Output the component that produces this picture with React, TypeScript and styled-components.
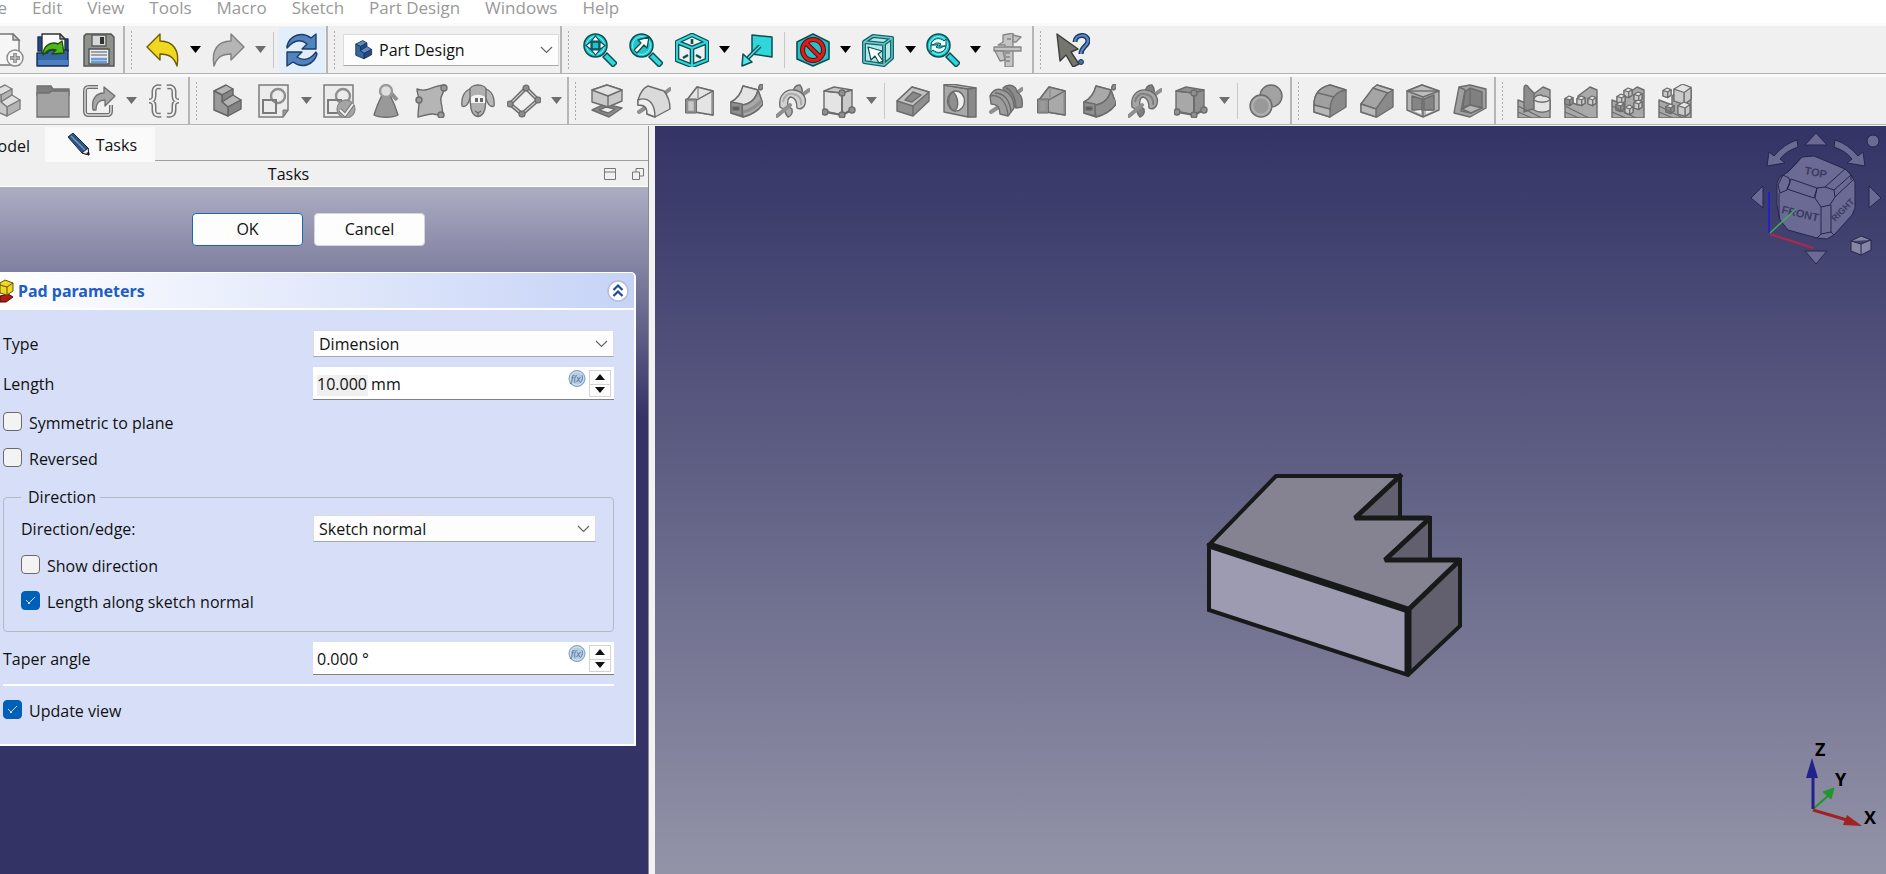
import React, { useId, useState } from 'react';
import styled, { createGlobalStyle, css } from 'styled-components';

const GlobalStyle = createGlobalStyle`
  *, *::before, *::after { box-sizing: border-box; }
  html, body { margin: 0; padding: 0; }
  body { font-family: "Open Sans", "Noto Sans", sans-serif; font-size: 16px; color: #111; background: #f0f0f0; }
  button, input, select { font: inherit; color: inherit; margin: 0; }
  svg { display: block; flex: none; }
`;

/* ---------- layout ---------- */

const Window = styled.div`
  display: flex;
  flex-direction: column;
  min-height: 100vh;
  overflow: hidden;
`;

const MenuBar = styled.nav`
  display: flex;
  gap: 25px;
  height: 23px;
  background: #fff;
  font-size: 17px;
  line-height: 16px;
`;

const MenuItem = styled.button<{ $clipped?: boolean }>`
  display: flex;
  justify-content: flex-end;
  align-items: flex-start;
  border: 0;
  padding: 0;
  background: none;
  color: #999;
  white-space: nowrap;
  ${(p) => p.$clipped && css`width: 7px; overflow: hidden;`}
`;

const ToolRow = styled.div`
  display: flex;
  height: 51px;
  background: #f0f0f0;
  border-top: 3px solid #fafafa;
  border-bottom: 1px solid #b2b2b2;
`;

const ToolGroup = styled.div<{ $width: number; $open?: boolean }>`
  display: flex;
  flex: none;
  justify-content: flex-end;
  align-items: center;
  width: ${(p) => p.$width}px;
  overflow: hidden;
  padding-right: 1px;
  border-right: ${(p) => (p.$open ? '0' : '2px solid #b6b6b6')};
`;

const Grip = styled.span`
  flex: none;
  width: 15px;
  height: 40px;
  background: radial-gradient(circle, #aaa 1px, transparent 1px) 4px 0 / 5px 4px repeat-y;
`;

const ToolButton = styled.button<{ $active?: boolean; $fixed?: boolean }>`
  display: flex;
  flex: ${(p) => (p.$fixed ? '0 0 46px' : '1 0 46px')};
  justify-content: center;
  align-items: center;
  height: 46px;
  padding: 0;
  border: 0;
  background: ${(p) => (p.$active ? '#e2effa' : 'none')};
`;

const DropButton = styled.button<{ $muted?: boolean }>`
  display: flex;
  flex: 0 0 19px;
  justify-content: center;
  align-items: center;
  height: 46px;
  padding: 0;
  border: 0;
  background: none;
  color: ${(p) => (p.$muted ? '#6e6e6e' : '#000')};
`;

const Divider = styled.span`
  flex: 0 0 9px;
  height: 36px;
  background: linear-gradient(#c8c8c8, #c8c8c8) 3px 0 / 1px 100% no-repeat;
`;

const Combo = styled.label<{ $h?: number }>`
  display: flex;
  flex: 1;
  align-items: center;
  gap: 5px;
  height: ${(p) => p.$h ?? 27}px;
  padding: 0 5px;
  background: #fdfdfd;
  border: 1px solid #dcdcdc;
  border-bottom-color: #a8a8a8;
`;

const WorkbenchCombo = styled(Combo)`
  padding: 0 5px 0 10px;
`;

const Select = styled.select`
  appearance: none;
  flex: 1;
  min-width: 0;
  padding: 0;
  border: 0;
  outline: 0;
  background: transparent;
`;

const Body = styled.div`
  display: flex;
  flex: 1;
  border-top: 1px solid #f6f6f6;
`;

const Side = styled.aside`
  display: flex;
  flex-direction: column;
  flex: 0 0 649px;
  border-right: 1px solid #8a8a8a;
`;

const Splitter = styled.div`
  flex: 0 0 6px;
  background: #f2f2f2;
`;

const Tabs = styled.div`
  display: flex;
  align-items: flex-end;
  height: 36px;
`;

const Tab = styled.button<{ $selected?: boolean }>`
  display: flex;
  align-items: center;
  justify-content: flex-end;
  gap: 6px;
  flex: none;
  width: ${(p) => (p.$selected ? 110 : 45)}px;
  height: ${(p) => (p.$selected ? 35 : 33)}px;
  padding: 0 ${(p) => (p.$selected ? 18 : 15)}px 0 0;
  overflow: hidden;
  border: 0;
  background: ${(p) => (p.$selected ? '#fafafa' : '#f0f0f0')};
`;

const TabRule = styled.span`
  flex: 1;
  height: 2px;
  background: linear-gradient(#a0a0a0 1px, transparent 1px);
`;

const DockTitle = styled.header`
  display: flex;
  align-items: center;
  height: 25px;
  border-bottom: 1px solid #fff;
`;

const DockName = styled.span`
  flex: 1;
  padding-right: 26px;
  text-align: center;
`;

const DockButtons = styled.span`
  display: flex;
  gap: 14px;
  width: 45px;
`;

const DockButton = styled.button`
  padding: 0;
  border: 0;
  background: none;
`;

const TaskArea = styled.div`
  flex: 1;
  background: linear-gradient(#acacc2 0, #333366 230px);
`;

const DialogButtons = styled.div`
  display: flex;
  justify-content: center;
  gap: 11px;
  padding: 26px 31px 26px 0;
`;

const DialogButton = styled.button<{ $primary?: boolean }>`
  width: 111px;
  height: 33px;
  padding: 0 0 1px;
  border: ${(p) => (p.$primary ? '1px solid #1769b5' : '1px solid #d5d5dc')};
  border-radius: 4px;
  background: #fdfdfd;
`;

const Card = styled.section`
  margin-right: 12px;
  border: solid #fff;
  border-width: 1px 2px 2px 0;
  border-radius: 0 5px 0 0;
  background: #d6dff7;
  overflow: hidden;
`;

const CardHeader = styled.header`
  display: flex;
  align-items: center;
  height: 37px;
  padding-right: 4px;
  background: linear-gradient(90deg, #fff, #c6d3f7);
  border-bottom: 2px solid #fff;
`;

const CardTitle = styled.h2`
  flex: 1;
  margin: 0;
  padding-left: 4px;
  font-family: "Noto Sans", "Open Sans", sans-serif;
  font-size: 16px;
  line-height: 22px;
  color: #215dc6;
`;

const CollapseButton = styled.button`
  padding: 0;
  border: 0;
  background: none;
`;

const Form = styled.div`
  display: flex;
  flex-direction: column;
  padding: 20px 20px 22px 3px;
`;

const Row = styled.div<{ $pad?: number }>`
  display: flex;
  align-items: center;
  padding-right: ${(p) => p.$pad ?? 0}px;
`;

const FieldLabel = styled.label<{ $inset?: boolean }>`
  width: ${(p) => (p.$inset ? 292 : 310)}px;
  line-height: 22px;
`;

const Field = styled.div`
  display: flex;
  flex: 1;
  height: 33px;
  padding: 3px 3px 2px 0;
  background: #fff;
  border-bottom: 1px solid #808080;
`;

const NumberInput = styled.input<{ $marked?: boolean }>`
  flex: 1;
  min-width: 0;
  padding: 0 0 0 4px;
  border: 0;
  outline: 0;
  background: ${(p) => (p.$marked ? 'linear-gradient(#efefef, #efefef) 4px 5px / 51px 21px no-repeat' : 'transparent')};
`;

const ExprButton = styled.button`
  display: flex;
  align-items: flex-start;
  justify-content: center;
  width: 23px;
  padding: 0;
  border: 0;
  background: none;
`;

const Spinner = styled.div`
  display: grid;
  grid-template-rows: 1fr 1fr;
  width: 22px;
  border: 1px solid #d4d4d4;
`;

const SpinButton = styled.button`
  display: flex;
  align-items: center;
  justify-content: center;
  padding: 0;
  border: 0;
  background: #fdfdfd;
  & + & { border-top: 1px solid #d4d4d4; }
`;

const CheckLabel = styled.label`
  display: flex;
  align-items: center;
  gap: 7px;
  height: 22px;
  line-height: 22px;
`;

const CheckBox = styled.input`
  appearance: none;
  width: 19px;
  height: 19px;
  flex: none;
  align-self: flex-start;
  border: 1px solid #6a6a6a;
  border-radius: 4px;
  background: #f3f3f3;
  &:checked {
    border-color: #005fb8;
    background: linear-gradient(45deg, transparent 44%, #cfe2f5 44%, #cfe2f5 56%, transparent 56%) 4px 8px / 4px 4px no-repeat,
      linear-gradient(-45deg, transparent 44%, #cfe2f5 44%, #cfe2f5 56%, transparent 56%) 6px 5px / 7px 7px no-repeat, #005fb8;
  }
`;

const Checks = styled.div<{ $top: number }>`
  display: flex;
  flex-direction: column;
  gap: 14px;
  padding-top: ${(p) => p.$top}px;
`;

const Group = styled.fieldset`
  margin: 16px 0 10px;
  padding: 7px 17px 18px;
  border: 1px solid #b4b8c4;
  border-radius: 4px;
`;

const Legend = styled.legend`
  margin-left: 0;
  padding: 0 4px 0 7px;
  line-height: 22px;
`;

const Spacer = styled.div`
  height: 10px;
`;

const Rule = styled.hr`
  width: 100%;
  height: 2px;
  margin: 9px 0 0;
  border: 0;
  background: #fff;
`;

const Viewport = styled.main`
  position: relative;
  flex: 1;
  background: linear-gradient(#333366, #9393a8);
`;

const ModelSvg = styled.svg`
  position: absolute;
  left: 549px;
  top: 346px;
`;

const NavSvg = styled.svg`
  position: absolute;
  right: 0;
  top: 0;
`;

const AxisSvg = styled.svg`
  position: absolute;
  right: 0;
  bottom: 0;
`;

/* ---------- icons ---------- */

const S = '#6c6c6c';
const D = '#8f8f8f';
const M = '#a9a9a9';
const L = '#c9c9c9';
const W = '#e4e4e4';
const T = '#2fd6da';
const TD = '#0d4f55';

const magnifier = (
  <g stroke={TD} strokeWidth="1.5">
    <path d="M20 24l4-4 10 10-4 4z" fill={T} />
    <circle cx="12.5" cy="12.5" r="11.5" fill="#25c3c8" />
    <circle cx="12.5" cy="12.5" r="9" fill="none" stroke="#6ff" strokeWidth="1" />
  </g>
);

const stair = (a: string, b: string, c: string, s: string) => (
  <g fill={a} stroke={s} strokeWidth="1.4" strokeLinejoin="round">
    <path d="M3 7l12-6 7 4-11 6z" />
    <path d="M11 11l11-6v6l-11 7z" fill={c} />
    <path d="M11 18l11-7 8 5-13 7z" />
    <path d="M17 23l13-7v9l-13 7z" fill={c} />
    <path d="M3 7l8 4v7l6 5v9L3 26z" fill={b} />
  </g>
);

const loft = (a: string, b: string) => (
  <g fill={a} stroke={S} strokeWidth="1.4" strokeLinejoin="round">
    <path d="M4 16L14 3l16 4v24l-18-3H4z" fill={b} />
    <path d="M4 16L14 3l16 4-18 10z" />
    <path d="M12 17L30 7v24l-18-3z" />
    <path d="M15 4v11M29 8v22" stroke={D} />
    <path d="M4 16h8v12H4z" fill={b} stroke={D} strokeWidth="2.6" />
    <path d="M2.500 15h11v14h-11z" fill="none" strokeWidth="1" />
  </g>
);

const sweep = (a: string, b: string) => (
  <g fill={a} stroke={S} strokeWidth="1.4" strokeLinejoin="round">
    <path d="M14 2l15 4 5 14c-5 7-12 11-20 13L2 29V18c6-3 10-8 12-16z" />
    <path d="M2 18c6-3 10-8 12-16l15 4c-2 9-8 14-16 15z" fill={b} />
    <path d="M13 21c8-1 14-6 16-15l5 14c-5 7-12 11-20 13z" fill={a} />
    <path d="M14 28c8-2 14-6 19-12" fill="none" stroke={D} strokeWidth="3" />
    <path d="M2 18l11 2v12L2 29z" fill={D} />
    <path d="M4 23h6v3H4z" fill="#555" />
    <ellipse cx="32" cy="3" rx="2" ry="3" fill={D} transform="rotate(25 32 3)" />
  </g>
);

const helix = (a: string, b: string) => (
  <g stroke={S} strokeWidth="1.4" strokeLinejoin="round">
    <path d="M17 10c0-5 2-9 7-9 3 4 3 8 0 12z" fill={b} />
    <path d="M9 20c-1 6 0 10 3 13 3-1 5-3 4-8z" fill={b} />
    <path d="M22 14L33 6" stroke={D} strokeWidth="4" strokeLinecap="round" />
    <path d="M4 23C2 11 10 5 18 6c8 1 13 7 11 14-1 4-5 6-8 4 0-4-1-10-6-11-3 0-4 5-3 10-3 2-6 2-8 0z" fill={a} />
    <path d="M7 18c1-6 5-9 10-8 6 1 9 5 8 11" fill="none" stroke={b} strokeWidth="2" />
    <path d="M1 32l13-11" stroke={D} strokeWidth="4" strokeLinecap="round" />
  </g>
);

const prim = (a: string, b: string) => (
  <g fill={a} stroke={S} strokeWidth="1.4" strokeLinejoin="round">
    <path d="M2 7l18 2v22L2 27z" fill={a} />
    <path d="M2 7l10-4 18 3-10 3z" fill={b} />
    <path d="M20 9l10-3v19l-10 6z" fill={b} />
    <path d="M3 28l17 3 10-5M20 9v22" fill="none" stroke={S} strokeWidth="2" />
    <circle cx="20" cy="9" r="3" fill={D} />
    <circle cx="3" cy="28" r="3" fill={D} />
    <circle cx="20" cy="31" r="3" fill={D} />
    <circle cx="30" cy="26" r="3" fill={D} />
  </g>
);

const revolve = (a: string, b: string) => (
  <g stroke={S} strokeWidth="1.4" strokeLinejoin="round">
    <path d="M2 28l9-6M28 9l5-4" stroke={D} strokeWidth="4" strokeLinecap="round" />
    <path d="M1 16C3 9 6 4 11 2l16 5c4 5 6 11 6 18l-15 8-8-3c0-7-2-9-9-9z" fill={a} />
    <path d="M1 16c10-4 17 3 17 17l-8-3c0-7-2-9-9-9z" fill={b} />
  </g>
);

const smallCube = (x: number, y: number, s: number, a: string, b: string) => (
  <g key={`${x}-${y}`} transform={`translate(${x} ${y}) scale(${s})`} fill={a} stroke={S} strokeWidth={1.2 / s} strokeLinejoin="round">
    <path d="M0 3l5-3 5 2v7l-4 3-6-2z" />
    <path d="M0 3l6 2v7l-6-2z" fill={b} />
    <path d="M6 5l4-3v7l-4 3z" fill={b} />
  </g>
);

const patternBase = <path d="M1 16l13 5 0-9L26 3l7 3v28H1z" fill={M} stroke={S} strokeWidth="1.4" strokeLinejoin="round" />;
const patternFloor = <path d="M1 22l24 12M1 28l14 6" fill="none" stroke={S} strokeWidth="1.2" />;

const sheet = (
  <g stroke="#7b7b7b" strokeWidth="1.5">
    <path d="M2 1h29v25l-5 7H2z" fill="#ececec" />
    <circle cx="21" cy="12" r="7" fill="none" stroke={D} strokeWidth="2.4" />
    <path d="M6 16h13v13H6z" fill="none" strokeWidth="2" />
  </g>
);

const icons: Record<string, React.ReactNode> = {
  'New document': (
    <g strokeWidth="1.4">
      <path d="M0 1h23l6 6v25H0z" fill="#f6f6f6" stroke="#777" />
      <path d="M23 1v6h6z" fill="#ccc" stroke="#777" />
      <circle cx="25" cy="25" r="8" fill="#f4f4f4" stroke="#8a8a8a" />
      <path d="M25 20v10M20 25h10" stroke="#777" strokeWidth="3.4" />
      <path d="M25 20.500v9M20.500 25h9" stroke="#d8d8d8" strokeWidth="1.200" />
    </g>
  ),
  Open: (
    <g strokeWidth="1.4" strokeLinejoin="round">
      <path d="M2 4h4v14H2zM28 6h4v12h-4z" fill="#204a87" stroke="#16305a" />
      <path d="M6 1h18l5 5v14H6z" fill="#fbfbfb" stroke="#333" />
      <path d="M24 1v5h5z" fill="#bbb" stroke="#333" />
      <path d="M1 20h10l3-3h18v16H1z" fill="#3465a4" stroke="#16305a" />
      <path d="M2 27h30v5H2z" fill="#4a80c0" stroke="none" />
      <path d="M7 22c0-10 9-14 15-11l4-3 2 12-12 1 4-4c-6-2-9 1-13 5z" fill="#4fb81a" stroke="#1d5205" />
    </g>
  ),
  Save: (
    <g strokeWidth="1.4">
      <path d="M4 1h25l3 3v29H2V3z" fill="#8e918c" stroke="#50534f" />
      <path d="M10 2h14v11H10z" fill="#d8d8d8" stroke="#5b5e59" />
      <path d="M18 4h4v7h-4z" fill="#333" />
      <path d="M7 16h20v15H7z" fill="#e9edf2" stroke="#50534f" />
      <path d="M9 19h16M9 22h16" stroke="#888" />
      <path d="M9 26h16M9 29h16" stroke="#6d9bd4" strokeWidth="2.4" />
    </g>
  ),
  Undo: <path d="M1 14L14 1v7c13 0 20 9 17 25-3-9-8-12-17-12v6z" fill="#f0d722" stroke="#6b5d00" strokeWidth="1.4" strokeLinejoin="round" />,
  Redo: <path d="M33 14L20 1v7C7 8 0 17 3 33c3-9 8-12 17-12v6z" fill="#b5b5b5" stroke="#7f7f7f" strokeWidth="1.4" strokeLinejoin="round" />,
  Refresh: (
    <g fill="#5183be" stroke="#1d3c6a" strokeWidth="1.4" strokeLinejoin="round">
      <path d="M2 13C5 2 17-2 26 5l5-4v15H17l5-5C16 6 9 7 2 15z" />
      <path d="M32 21C29 32 17 36 8 29l-6 4V19h15l-5 5c6 4 13 3 19-5z" />
    </g>
  ),
  Workbench: stair('#5b8bc4', '#34659f', '#244a7c', '#152f55'),
  'Fit all': (
    <>
      {magnifier}
      <path d="M12.500 3l4 5h-8zM12.500 22l4-5h-8zM3 12.500l5-4v8zM22 12.500l-5-4v8z" fill="#fff" stroke={TD} strokeWidth="1.2" />
      <path d="M9 9h7v7H9z" fill="none" stroke={TD} strokeWidth="1.4" />
    </>
  ),
  'Fit selection': (
    <>
      {magnifier}
      <path d="M5 17l7-7-3-3 11-3-2 11-3-3-7 8z" fill="#fff" stroke={TD} strokeWidth="1.3" strokeLinejoin="round" />
    </>
  ),
  Isometric: (
    <g fill="none" strokeLinejoin="round">
      <path d="M17 2l15 7v18l-15 6-15-6V9zM2 9l15 6 15-6M17 15v18" stroke={TD} strokeWidth="4.6" />
      <path d="M17 2l15 7v18l-15 6-15-6V9zM2 9l15 6 15-6M17 15v18" stroke={T} strokeWidth="2" />
      <path d="M17 6v5M8 25l5-3M26 25l-5-3" stroke={TD} strokeWidth="2.6" />
    </g>
  ),
  'Align to selection': (
    <g stroke={TD} strokeWidth="1.5" strokeLinejoin="round">
      <path d="M12 2l20 2v20l-20-3z" fill={T} />
      <path d="M20 13L8 25" strokeWidth="4" />
      <path d="M20 13L8 25" stroke="#55e3e6" strokeWidth="1.4" />
      <path d="M3 21l9 8-10 4z" fill="#55e3e6" />
    </g>
  ),
  'Draw style': (
    <g strokeLinejoin="round">
      <path d="M17 1l16 8v17l-16 7-16-7V9z" fill="#25c3c8" stroke={TD} strokeWidth="1.6" />
      <circle cx="17" cy="17" r="10.500" fill="none" stroke="#5a0909" strokeWidth="5" />
      <path d="M10 10l14 14" stroke="#5a0909" strokeWidth="5" />
      <circle cx="17" cy="17" r="10.500" fill="none" stroke="#d81e1e" strokeWidth="3" />
      <path d="M10 10l14 14" stroke="#d81e1e" strokeWidth="3" />
    </g>
  ),
  'Bounding box': (
    <g fill="none" strokeLinejoin="round">
      <path d="M3 9l9-6 19 2v20l-8 7-20-3z" fill="#b5e8e9" />
      <path d="M3 9l9-6 19 2-8 6zM3 9v20l20 3V11M31 5v20l-8 7" stroke="#17646a" strokeWidth="4" />
      <path d="M3 9l9-6 19 2-8 6zM3 9v20l20 3V11M31 5v20l-8 7" stroke="#6fc9cb" strokeWidth="1.4" />
      <path d="M7 14l14 4-4 3 5 7-4 2-4-7-4 4z" fill="#fff" stroke={TD} strokeWidth="1.2" />
    </g>
  ),
  'Zoom tools': (
    <>
      {magnifier}
      <path d="M5 11c2-6 9-7 13-3l2-2v7h-7l2-2c-3-2-6-1-8 1zM20 14c-2 6-9 7-13 3l-2 2v-7h7l-2 2c3 2 6 1 8-1z" fill="#e9ffff" stroke={TD} strokeWidth="1" />
    </>
  ),
  Measure: (
    <g fill="#c4c4c4" stroke="#858585" strokeWidth="1.3" strokeLinejoin="round">
      <path d="M12 2l10-2v34h-8V12H7l5-3z" />
      <path d="M22 2l8 2-5 5h-3zM3 14h27v4H3z" />
      <path d="M4 18h8l2 9-5 1z" />
      <path d="M15 20h4M15 24h4M15 28h4M16 6h4" />
    </g>
  ),
  "What's this?": (
    <g strokeLinejoin="round">
      <path d="M1 1l21 15-7 3 8 12-6 3-7-12-6 6z" fill="#74766e" stroke="#3c3e38" strokeWidth="1.4" />
      <path d="M19 9c0-8 13-9 13-1 0 5-7 6-7 13" fill="none" stroke="#1c3866" strokeWidth="5" />
      <path d="M19 9c0-8 13-9 13-1 0 5-7 6-7 13" fill="none" stroke="#5a8ac4" strokeWidth="2.200" />
      <circle cx="25" cy="29" r="2.500" fill="#4470ab" stroke="#1c3866" />
    </g>
  ),
  Part: stair('#e0e0e0', '#c8c8c8', '#b4b4b4', '#7d7d7d'),
  Group: (
    <g fill={D} stroke="#707070" strokeWidth="1.3">
      <path d="M1 2h14l2 3h16v6H1z" fill="#7d7d7d" />
      <path d="M1 9h12l3-2h17v26H1z" fill="#a3a3a3" />
    </g>
  ),
  Link: (
    <g strokeLinejoin="round">
      <path d="M16 3H7c-3 0-4 1-4 4v20c0 3 1 4 4 4h18c3 0 4-1 4-4v-6" fill="none" stroke="#6f6f6f" strokeWidth="4" />
      <path d="M16 3H7c-3 0-4 1-4 4v20c0 3 1 4 4 4h18c3 0 4-1 4-4v-6" fill="none" stroke="#dcdcdc" strokeWidth="1.4" />
      <path d="M11 26c-2-11 3-17 11-17V3l11 9-10 10v-6c-6 0-9 3-9 10z" fill="#a6a6a6" stroke="#6f6f6f" strokeWidth="1.3" />
    </g>
  ),
  Variables: (
    <g fill="none">
      <path d="M14 3c-5-1-7 1-7 5v4c0 3-1 5-5 5 4 0 5 2 5 5v4c0 4 2 6 7 5M20 3c5-1 7 1 7 5v4c0 3 1 5 5 5-4 0-5 2-5 5v4c0 4-2 6-7 5" stroke="#777" strokeWidth="5" />
      <path d="M14 3c-5-1-7 1-7 5v4c0 3-1 5-5 5 4 0 5 2 5 5v4c0 4 2 6 7 5M20 3c5-1 7 1 7 5v4c0 3 1 5 5 5-4 0-5 2-5 5v4c0 4-2 6-7 5" stroke="#f0f0f0" strokeWidth="2" />
    </g>
  ),
  Body: stair('#b5b5b5', '#9a9a9a', '#858585', '#646464'),
  Sketch: (
    <>
      {sheet}
      <path d="M31 26l-5 7v-7z" fill="#999" stroke="#777" />
    </>
  ),
  'Validate sketch': (
    <>
      {sheet}
      <circle cx="24" cy="25" r="9" fill="#a5a5a5" stroke="#8a8a8a" strokeWidth="1.3" />
      <path d="M18 26l5 5 8-11" fill="none" stroke="#777" strokeWidth="4" />
      <path d="M18 26l5 5 8-11" fill="none" stroke="#eee" strokeWidth="2" />
    </>
  ),
  'Check geometry': (
    <g stroke={S} strokeWidth="1.4" strokeLinejoin="round">
      <path d="M22 9l6 7" stroke={D} strokeWidth="4" />
      <path d="M13 11h8c3 6 6 13 8 20-5 3-19 3-24 0 2-7 5-14 8-20z" fill="#999" />
      <circle cx="17" cy="7" r="6" fill="#dedede" stroke="#999" strokeWidth="2.4" />
    </g>
  ),
  'Sub-shape binder': (
    <g fill="#9a9a9a" stroke={S} strokeWidth="1.4" strokeLinejoin="round">
      <path d="M2 5c10 4 16-4 28-4 0 9-6 11-4 16 0 5 3 8 1 16-7-5-13-3-24 0 0-7 1-10 1-14C5 13 2 11 2 5z" fill="#b5b5b5" />
      <circle cx="29" cy="4" r="3" /><circle cx="4" cy="16" r="3" /><circle cx="26" cy="31" r="3" />
    </g>
  ),
  Clone: (
    <g fill="#8c8c8c" stroke={S} strokeWidth="1.3" strokeLinejoin="round">
      <path d="M8 7C9-1 25-1 26 7l-2 18c-3 10-11 10-14 0z" fill="#b0b0b0" />
      <path d="M9 5C3 7 0 14 1 22c4 2 7-3 8-8zM25 5c6 2 9 9 8 17-4 2-7-3-8-8z" fill="#b8b8b8" />
      <path d="M10 13c4-3 10-3 14 0v6H10z" fill="#f4f4f4" stroke="none" />
      <path d="M14 14h3v4h-3zM19 14h3v4h-3z" fill="#666" stroke="none" />
      <path d="M14 27l3 2 3-2M17 29v3" fill="none" />
    </g>
  ),
  Datum: (
    <g fill="none" stroke={S}>
      <path d="M19 4L31 16 15 30 3 20z" strokeWidth="4" />
      <path d="M19 4L31 16 15 30 3 20z" stroke="#ccc" strokeWidth="1.200" />
      <g fill="#8c8c8c" strokeWidth="1.2">
        <circle cx="19" cy="4" r="3" /><circle cx="31" cy="16" r="3" /><circle cx="15" cy="30" r="3" /><circle cx="3" cy="20" r="3" />
      </g>
    </g>
  ),
  Pad: (
    <g stroke={S} strokeWidth="1.4" strokeLinejoin="round">
      <path d="M2 26l13-6 17 4-13 9z" fill="#8a8a8a" />
      <path d="M9 26l7-3 9 2-7 4z" fill="#efefef" />
      <path d="M2 6l15-5 15 5v11l-14 6-16-5z" fill={L} />
      <path d="M2 6l15-5 15 5-14 6z" fill={W} />
      <path d="M18 12v11" />
    </g>
  ),
  Revolution: revolve('#dadada', '#efefef'),
  Loft: loft(W, L),
  Sweep: sweep(M, W),
  Helix: helix('#d2d2d2', '#ababab'),
  Primitive: prim(W, L),
  Pocket: (
    <g stroke={S} strokeWidth="1.4" strokeLinejoin="round">
      <path d="M1 17L16 3l17 5v9L17 32 1 27z" fill="#8f8f8f" />
      <path d="M1 17L16 3l17 5-16 14z" fill="#c0c0c0" />
      <path d="M9 16l8-8 8 3-9 7z" fill="#8a8a8a" />
      <path d="M17 22v10" />
    </g>
  ),
  Hole: (
    <g stroke={S} strokeWidth="1.4" strokeLinejoin="round">
      <path d="M1 1l24 4v28L1 28z" fill="#a8a8a8" />
      <path d="M1 1l8-1 24 4-8 1z" fill="#c0c0c0" />
      <path d="M25 5l8-1v29h-8z" fill="#8a8a8a" />
      <ellipse cx="13" cy="17" rx="8.500" ry="10" fill="#f0f0f0" />
      <path d="M10 8c-6 4-6 15 1 19 6-3 4-15-1-19z" fill="#8f8f8f" />
    </g>
  ),
  Groove: (
    <g stroke={S} strokeWidth="1.4" strokeLinejoin="round">
      <path d="M2 28l9-6M28 9l5-4" stroke={D} strokeWidth="4" strokeLinecap="round" />
      <path d="M14 4c5-5 13-3 14 4 5 3 6 8 5 15l-6 1-6-6z" fill="#8c8c8c" />
      <path d="M1 12C4 6 8 4 13 6c7 2 12 8 12 18l-6 8-8-2c0-7-3-10-9-10z" fill="#9d9d9d" />
      <path d="M1 12c9-2 17 5 18 20M6 9c9 0 15 7 16 19M17 4c5 2 9 9 10 19" fill="none" />
    </g>
  ),
  'Subtractive loft': loft(M, '#9a9a9a'),
  'Subtractive sweep': sweep(D, M),
  'Subtractive helix': helix('#a5a5a5', '#808080'),
  'Subtractive primitive': prim('#a8a8a8', D),
  Boolean: (
    <g stroke={S} strokeWidth="1.4">
      <circle cx="22" cy="12" r="11" fill="#a2a2a2" />
      <circle cx="12" cy="22" r="11" fill="#a2a2a2" />
      <circle cx="12" cy="22" r="8.500" fill="#999" stroke="#b5b5b5" />
    </g>
  ),
  Fillet: (
    <g stroke={S} strokeWidth="1.4" strokeLinejoin="round">
      <path d="M1 21C1 9 8 3 17 1l16 5v17L17 33 1 28z" fill="#8a8a8a" />
      <path d="M1 21C1 9 8 3 17 1l16 5c-9 1-16 8-16 20z" fill="#a0a0a0" />
      <path d="M1 21l16 4v8L1 28z" fill="#b8b8b8" />
      <path d="M5 9l16 4" fill="none" />
    </g>
  ),
  Chamfer: (
    <g stroke={S} strokeWidth="1.4" strokeLinejoin="round">
      <path d="M1 20L17 1l16 5v17L17 33 1 28z" fill="#8a8a8a" />
      <path d="M1 20L13 4l15 4-12 17z" fill="#a5a5a5" />
      <path d="M13 4l4-3 16 5-5 3z" fill="#c0c0c0" />
      <path d="M1 20l15 5v8L1 28z" fill="#b8b8b8" />
    </g>
  ),
  Draft: (
    <g stroke={S} strokeWidth="1.4" strokeLinejoin="round">
      <path d="M1 7l15-6 17 6v19l-16 7-16-7z" fill="#b4b4b4" />
      <path d="M1 7l15-6 17 6-16 6z" fill="#bdbdbd" />
      <path d="M1 7l32 0" />
      <path d="M6 12l10 3v11l-10 0zM18 15l10-4v15l-10 0z" fill="#858585" />
      <path d="M8 27l7-1v4zM20 27l7 0-7 3z" fill="#f0f0f0" stroke="none" />
      <path d="M17 13v20" />
    </g>
  ),
  Thickness: (
    <g stroke={S} strokeWidth="1.4" strokeLinejoin="round">
      <path d="M6 3l11-2 16 4v19L17 33 1 29z" fill="#a0a0a0" />
      <path d="M12 8l5-4 12 4v15l-8 4-11-4z" fill="#808080" />
      <path d="M17 5v16l-8 3M17 21l13 3" fill="none" />
      <path d="M9 25l8-4 12 3-11 5z" fill="#b5b5b5" />
      <path d="M6 3l6 3-4 21 10 2" fill="none" />
    </g>
  ),
  Mirrored: (
    <>
      {patternBase}
      <g stroke={S} strokeWidth="1.4">
        <path d="M7 5c0-5 3-5 5-1l5 5v16l-5 1-5 2z" fill="#8c8c8c" />
        <path d="M17 16c0-5 7-6 9-4 4 0 7 2 7 4v10c-4 3-12 3-16 0z" fill={W} />
        <path d="M17 16c4 3 12 3 16 0" fill="none" />
      </g>
      {patternFloor}
    </>
  ),
  'Linear pattern': (
    <>
      {patternBase}
      {smallCube(1, 12, 0.8, W, D)}
      {smallCube(13, 12, 0.8, W, L)}
      {smallCube(24, 12, 0.8, W, L)}
      {patternFloor}
    </>
  ),
  'Polar pattern': (
    <>
      {patternBase}
      {smallCube(13, 4, 0.8, W, L)}
      {smallCube(23, 8, 0.8, W, L)}
      {smallCube(6, 10, 0.8, W, L)}
      {smallCube(23, 16, 0.8, W, L)}
      {smallCube(5, 18, 0.8, W, D)}
      {smallCube(14, 21, 0.8, W, L)}
      {patternFloor}
    </>
  ),
  'Multi transform': (
    <>
      {patternBase}
      {smallCube(5, 4, 0.8, W, L)}
      {smallCube(16, 0, 1.7, W, L)}
      {smallCube(8, 20, 0.8, W, D)}
      {smallCube(20, 18, 1.2, W, L)}
      {patternFloor}
    </>
  ),
};

const Icon = ({ name, size = 34 }: { name: string; size?: number }) => (
  <svg width={size} height={size} viewBox="0 0 34 34" aria-hidden="true">{icons[name]}</svg>
);

const Chevron = () => (
  <svg width="13" height="13" viewBox="0 0 13 13" aria-hidden="true">
    <path d="M1 4l5.500 5.500L12 4" fill="none" stroke="#666" strokeWidth="1.2" />
  </svg>
);

const Triangle = ({ up }: { up?: boolean }) => (
  <svg width="10" height="6" viewBox="0 0 10 6" aria-hidden="true">
    <path d={up ? 'M0 6L5 0l5 6z' : 'M0 0h10L5 6z'} fill="currentColor" />
  </svg>
);

/* ---------- parts ---------- */

type Item = string | { drop: 'on' | 'off' } | { divider: true };
const on: Item = { drop: 'on' };
const off: Item = { drop: 'off' };
const div: Item = { divider: true };

const Tools = ({ items, fixed }: { items: Item[]; fixed?: boolean }) => (
  <>
    {items.map((item, i) => {
      if (typeof item === 'string') {
        return (
          <ToolButton key={item} type="button" aria-label={item} $active={item === 'Refresh'} $fixed={fixed}>
            <Icon name={item} />
          </ToolButton>
        );
      }
      if ('drop' in item) {
        return (
          <DropButton key={i} type="button" aria-label="More" $muted={item.drop === 'off'}>
            <svg width="11" height="7" viewBox="0 0 11 7" aria-hidden="true"><path d="M0 0h11L5.500 7z" fill="currentColor" /></svg>
          </DropButton>
        );
      }
      return <Divider key={i} />;
    })}
  </>
);

const Check = ({ label, checked = false }: { label: string; checked?: boolean }) => {
  const [value, setValue] = useState(checked);
  return (
    <CheckLabel>
      <CheckBox type="checkbox" checked={value} onChange={(e) => setValue(e.target.checked)} />
      {label}
    </CheckLabel>
  );
};

const Quantity = ({ label, initial, marked }: { label: string; initial: string; marked?: boolean }) => {
  const id = useId();
  return (
    <Row>
      <FieldLabel htmlFor={id}>{label}</FieldLabel>
      <Field>
        <NumberInput id={id} type="text" defaultValue={initial} $marked={marked} />
        <ExprButton type="button" aria-label="Expression">
          <svg width="19" height="18" viewBox="0 0 19 18">
            <circle cx="9" cy="8.500" r="8" fill="#b4cbe0" stroke="#7f9dbd" />
            <circle cx="9" cy="8.500" r="6.500" fill="none" stroke="#d6e4f0" />
            <text x="9" y="12" textAnchor="middle" fontSize="9" fontStyle="italic" fill="#456a93">f(x)</text>
          </svg>
        </ExprButton>
        <Spinner>
          <SpinButton type="button" aria-label="Increase"><Triangle up /></SpinButton>
          <SpinButton type="button" aria-label="Decrease"><Triangle /></SpinButton>
        </Spinner>
      </Field>
    </Row>
  );
};

const Choice = ({ label, options, inset }: { label: string; options: string[]; inset?: boolean }) => {
  const id = useId();
  return (
    <Row>
      <FieldLabel htmlFor={id} $inset={inset}>{label}</FieldLabel>
      <Combo as="div">
        <Select id={id}>{options.map((o) => <option key={o}>{o}</option>)}</Select>
        <Chevron />
      </Combo>
    </Row>
  );
};

const Model = () => (
  <ModelSvg width="262" height="208" viewBox="1204 471 262 208" role="img" aria-label="Pad preview">
    <path d="M1400 475v42h-45zM1430 517v42h-45z" fill="#62606e" />
    <path d="M1276 475h124l-45 42h75l-45 42h75l-52 50-199-65z" fill="#858392" />
    <path d="M1209 544l199 65v65l-199-65z" fill="#9c9bb2" />
    <path d="M1408 609l52-50v66l-52 49z" fill="#62606e" />
    <g fill="none" stroke="#181a1a" strokeWidth="4" strokeLinecap="square">
      <path d="M1209 544l67-69h124v42M1430 517v42M1209 544v65l199 65 52-49v-66" />
      <path d="M1400 475l-45 42h75l-45 42h75l-52 50" strokeWidth="5" strokeLinejoin="bevel" />
      <path d="M1209 544l199 65v63" strokeWidth="7" strokeLinecap="butt" />
    </g>
  </ModelSvg>
);

const NavCube = () => (
  <NavSvg width="156" height="160" viewBox="0 6 156 160" role="img" aria-label="Navigation cube">
    <g fill="#6b6a95" stroke="#25254a" strokeWidth="1" strokeLinejoin="round">
      <path d="M86 13l11 12H75zM86 144l11-13H75zM21 78l12-12v22zM151 78l-12-12v22z" />
      <path d="M37 46l2-14 5 4q10-12 23-16l1 7q-12 4-18 12l5 4z" />
      <path d="M135 46l-2-14-5 4q-10-12-23-16l-1 7q12 4 18 12l-5 4z" />
      <circle cx="143" cy="21" r="6" />
      <path d="M72 37l12-1 31 13 6 6 4 7v26l-3 7-18 20-7 4-10-1-29-8-8-10-3-15V63l3-6 8-5z" />
      <path d="M53 55l6 3 1 5-3 7-7 3-2-8zM61 59l26 9-3 10-27-9zM87 68l8-1 9 3 1 7-5 8-9 2-6-9zM95 67l20-18M104 70l17-15M121 55v5M105 77l19-18M91 87v27l10-2V85M87 118l4-4M101 112l3 3M49 73v25M58 52l14-15" fill="none" />
      <path d="M121 121l10-5 10 4v10l-10 5-10-4zM121 121l10 3 10-4M131 124v11" fill="#8685a3" />
    </g>
    <g fill="#3a3a60" fontWeight="bold" fontFamily="Liberation Sans, sans-serif">
      <text x="74" y="54" transform="rotate(11 74 54)" fontSize="11">TOP</text>
      <text x="51" y="93" transform="rotate(13 51 93)" fontSize="11">FRONT</text>
      <text x="105" y="102" transform="rotate(-45 105 102)" fontSize="9">RIGHT</text>
    </g>
    <path d="M39 113V72" stroke="#2222c8" strokeWidth="2" />
    <path d="M40 113l26-24" stroke="#3fae5c" strokeWidth="1.5" />
    <path d="M40 114l43 14" stroke="#b02848" strokeWidth="2" />
  </NavSvg>
);

const Axes = () => (
  <AxisSvg width="106" height="144" viewBox="0 0 106 144" role="img" aria-label="Axis cross">
    <path d="M33 79l16-14" stroke="#21962a" strokeWidth="2" />
    <path d="M54 58l-11 4 8 7z" fill="#21962a" stroke="#21962a" strokeWidth="1" />
    <path d="M33 79V46" stroke="#22228c" strokeWidth="3" />
    <path d="M32 28l6 20H26z" fill="#22228c" />
    <path d="M33 80l34 10" stroke="#a02222" strokeWidth="3" />
    <path d="M82 96l-19-1 4-10z" fill="#a02222" />
    <g fontSize="18" fontWeight="bold" fill="#000">
      <text x="35" y="26">Z</text>
      <text x="55" y="56">Y</text>
      <text x="84" y="94">X</text>
    </g>
  </AxisSvg>
);

export default function App() {
  return (
    <>
      <GlobalStyle />
      <Window>
        <MenuBar>
          <MenuItem type="button" $clipped>File</MenuItem>
          {['Edit', 'View', 'Tools', 'Macro', 'Sketch', 'Part Design', 'Windows', 'Help'].map((m) => (
            <MenuItem key={m} type="button">{m}</MenuItem>
          ))}
        </MenuBar>
        <ToolRow>
          <ToolGroup $width={125}><Tools fixed items={['New document', 'Open', 'Save']} /></ToolGroup>
          <ToolGroup $width={203}><Grip /><Tools items={['Undo', on, 'Redo', off, div, 'Refresh']} /></ToolGroup>
          <ToolGroup $width={234}>
            <Grip />
            <WorkbenchCombo $h={32}>
              <Icon name="Workbench" size={20} />
              <Select aria-label="Workbench"><option>Part Design</option></Select>
              <Chevron />
            </WorkbenchCombo>
          </ToolGroup>
          <ToolGroup $width={472}>
            <Grip />
            <Tools items={['Fit all', 'Fit selection', 'Isometric', on, 'Align to selection', div, 'Draw style', on, 'Bounding box', on, 'Zoom tools', on, 'Measure']} />
          </ToolGroup>
          <ToolGroup $width={63} $open><Grip /><Tools items={["What's this?"]} /></ToolGroup>
        </ToolRow>
        <ToolRow>
          <ToolGroup $width={190}><Tools fixed items={['Part', 'Group', 'Link', off, 'Variables']} /></ToolGroup>
          <ToolGroup $width={379}>
            <Grip />
            <Tools items={['Body', 'Sketch', off, 'Validate sketch', 'Check geometry', 'Sub-shape binder', 'Clone', 'Datum', off]} />
          </ToolGroup>
          <ToolGroup $width={723}>
            <Grip />
            <Tools
              items={['Pad', 'Revolution', 'Loft', 'Sweep', 'Helix', 'Primitive', off, div, 'Pocket', 'Hole', 'Groove',
                'Subtractive loft', 'Subtractive sweep', 'Subtractive helix', 'Subtractive primitive', off, div, 'Boolean']}
            />
          </ToolGroup>
          <ToolGroup $width={204}><Grip /><Tools items={['Fillet', 'Chamfer', 'Draft', 'Thickness']} /></ToolGroup>
          <ToolGroup $width={203} $open>
            <Grip />
            <Tools items={['Mirrored', 'Linear pattern', 'Polar pattern', 'Multi transform']} />
          </ToolGroup>
        </ToolRow>
        <Body>
          <Side>
            <Tabs>
              <Tab type="button">Model</Tab>
              <Tab type="button" $selected>
                <svg width="23" height="23" viewBox="0 0 23 23" aria-hidden="true">
                  <path d="M1 4l5-4 15 15 1 7-7-2z" fill="#2f5480" stroke="#152a45" strokeLinejoin="round" />
                  <path d="M4 3l14 14" stroke="#6d94c4" strokeWidth="1.500" />
                  <path d="M15 20l6-5 1 7z" fill="#eee" stroke="#222" />
                  <path d="M19 20l3-1 0 3z" fill="#111" />
                </svg>
                Tasks
              </Tab>
              <TabRule />
            </Tabs>
            <DockTitle>
              <DockName>Tasks</DockName>
              <DockButtons>
                <DockButton type="button" aria-label="Dock">
                  <svg width="14" height="14" viewBox="0 0 14 14"><path d="M1.500 1.500h11v11h-11zM1.500 5h11" fill="none" stroke="#777" /></svg>
                </DockButton>
                <DockButton type="button" aria-label="Float">
                  <svg width="14" height="14" viewBox="0 0 14 14"><path d="M1.500 5h7v7.500h-7zM5 5V1.500h7.500V9H9" fill="none" stroke="#777" /></svg>
                </DockButton>
              </DockButtons>
            </DockTitle>
            <TaskArea>
              <DialogButtons>
                <DialogButton type="button" $primary>OK</DialogButton>
                <DialogButton type="button">Cancel</DialogButton>
              </DialogButtons>
              <Card>
                <CardHeader>
                  <svg width="14" height="26" viewBox="0 0 14 26" aria-hidden="true">
                    <path d="M0 18l8-2 5 3-7 5H0z" fill="#b01c1c" stroke="#4a0505" />
                    <path d="M0 5l5-3 8 3v8l-6 4-7-2z" fill="#f0d722" stroke="#5e5200" />
                    <path d="M0 7l7 2 6-4M7 9v8" fill="none" stroke="#5e5200" />
                  </svg>
                  <CardTitle>Pad parameters</CardTitle>
                  <CollapseButton type="button" aria-label="Collapse">
                    <svg width="24" height="24" viewBox="0 0 24 24">
                      <circle cx="12" cy="12" r="10" fill="#fff" stroke="#b4bcd4" strokeWidth="1.500" />
                      <path d="M7.500 11L12 6.500l4.500 4.500M7.500 17l4.500-4.500 4.500 4.500" fill="none" stroke="#1c4a9c" strokeWidth="2.200" />
                    </svg>
                  </CollapseButton>
                </CardHeader>
                <Form>
                  <Choice label="Type" options={['Dimension', 'To last', 'To first', 'Up to face', 'Two dimensions']} />
                  <Spacer />
                  <Quantity label="Length" initial="10.000 mm" marked />
                  <Checks $top={12}>
                    <Check label="Symmetric to plane" />
                    <Check label="Reversed" />
                  </Checks>
                  <Group>
                    <Legend>Direction</Legend>
                    <Choice inset label="Direction/edge:" options={['Sketch normal', 'Select reference…', 'Custom direction']} />
                    <Checks $top={13}>
                      <Check label="Show direction" />
                      <Check label="Length along sketch normal" checked />
                    </Checks>
                  </Group>
                  <Quantity label="Taper angle" initial="0.000 °" />
                  <Rule />
                  <Checks $top={14}>
                    <Check label="Update view" checked />
                  </Checks>
                </Form>
              </Card>
            </TaskArea>
          </Side>
          <Splitter />
          <Viewport>
            <Model />
            <NavCube />
            <Axes />
          </Viewport>
        </Body>
      </Window>
    </>
  );
}
